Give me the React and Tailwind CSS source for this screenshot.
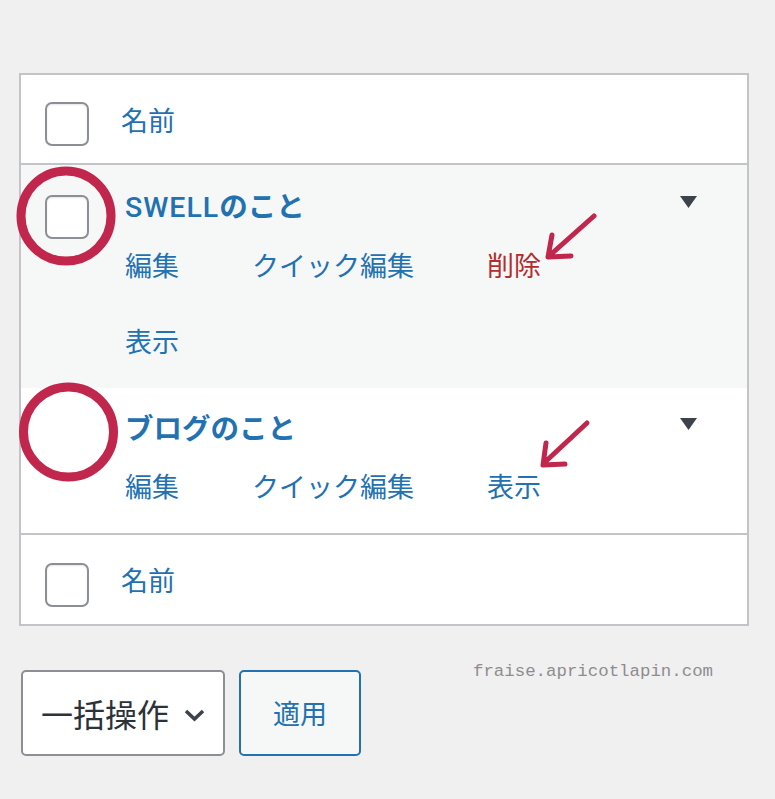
import React from 'react';

const jp = { fontFamily: '"Noto Sans CJK JP", "Noto Sans", sans-serif' };

const Checkbox = ({ className = '' }) => (
  <div className={`w-[44px] h-[44px] rounded-[7px] border-2 border-[#8c8f94] bg-white shadow-[inset_0_1px_2px_rgba(0,0,0,0.1)] ${className}`} />
);

const Caret = ({ className = '' }) => (
  <svg width="17" height="12" viewBox="0 0 17 12" className={className}>
    <path d="M0 0 H17 L8.5 12 Z" fill="#3c434a" />
  </svg>
);

export default function App() {
  return (
    <div className="relative min-h-[799px] bg-[#f0f0f1] pt-[73px] pl-[19px]" style={jp}>
      {/* table */}
      <div className="w-[730px] border-2 border-[#c3c4c7] bg-white">
        <div className="flex items-start h-[90px] border-b-2 border-[#c3c4c7]">
          <Checkbox className="ml-[24px] mt-[27px]" />
          <span className="ml-[32px] mt-[25px] text-[27px] leading-[40px] text-[#2271b1]">名前</span>
        </div>

        {/* row 1 */}
        <div className="flex items-start h-[223px] bg-[#f6f7f7]">
          <Checkbox className="ml-[24px] mt-[30px]" />
          <div className="ml-[36px] pt-[20px] flex-1">
            <div className="text-[28.5px] leading-[40px] font-bold text-[#2271b1]">
              <span className="font-medium tracking-[1px]" style={{ fontFamily: 'Roboto, sans-serif' }}>SWELL</span>のこと
            </div>
            <div className="flex mt-[17px] text-[27px] leading-[40px] text-[#2271b1]">
              <span className="w-[127px]">編集</span>
              <span className="w-[235px]">クイック編集</span>
              <span className="text-[#b32d2e]">削除</span>
            </div>
            <div className="mt-[36px] text-[27px] leading-[40px] text-[#2271b1]">表示</div>
          </div>
          <Caret className="mt-[31px] mr-[50px]" />
        </div>

        {/* row 2 */}
        <div className="flex items-start h-[147px] bg-white border-b-2 border-[#c3c4c7]">
          <div className="w-[104px]" />
          <div className="pt-[19px] flex-1">
            <div className="text-[28.5px] leading-[40px] font-bold text-[#2271b1]">ブログのこと</div>
            <div className="flex mt-[19px] text-[27px] leading-[40px] text-[#2271b1]">
              <span className="w-[127px]">編集</span>
              <span className="w-[235px]">クイック編集</span>
              <span>表示</span>
            </div>
          </div>
          <Caret className="mt-[30px] mr-[50px]" />
        </div>

        {/* footer */}
        <div className="flex items-start h-[89px]">
          <Checkbox className="ml-[24px] mt-[28px]" />
          <span className="ml-[32px] mt-[25px] text-[27px] leading-[40px] text-[#2271b1]">名前</span>
        </div>
      </div>

      {/* bulk actions */}
      <div className="flex items-start mt-[44px] ml-[2px]">
        <div className="flex items-center w-[204px] h-[86px] rounded-[5px] border-2 border-[#8c8f94] bg-white pl-[18px]">
          <span className="text-[32px] text-[#2c3338]">一括操作</span>
          <svg width="23" height="14" viewBox="0 0 23 14" className="ml-[14px] mt-[4px]">
            <path d="M3 3 L11.5 11 L20 3" fill="none" stroke="#3c434a" strokeWidth="3.5" />
          </svg>
        </div>
        <div className="flex items-center justify-center ml-[14px] w-[122px] h-[86px] rounded-[5px] border-2 border-[#2271b1] bg-[#f6f7f7]">
          <span className="text-[27px] text-[#2271b1]">適用</span>
        </div>
        <div className="ml-[112px] -mt-[11px] text-[17.4px] text-[#8d8d8d]" style={{ fontFamily: '"Liberation Mono", monospace' }}>
          fraise.apricotlapin.com
        </div>
      </div>

      {/* annotations */}
      <svg className="absolute left-0 top-0 pointer-events-none" width="775" height="799">
        <g fill="none" stroke="#c1264c" strokeLinecap="round" strokeLinejoin="round">
          <circle cx="66" cy="216" r="45" strokeWidth="9" />
          <circle cx="68.5" cy="432" r="45" strokeWidth="9" />
          <path d="M594 216 L549 256 M552 235 L548 257 L571 256" strokeWidth="5" />
          <path d="M587 423 L544 463 M546 443 L543 465 L565 464" strokeWidth="5" />
        </g>
      </svg>
    </div>
  );
}
